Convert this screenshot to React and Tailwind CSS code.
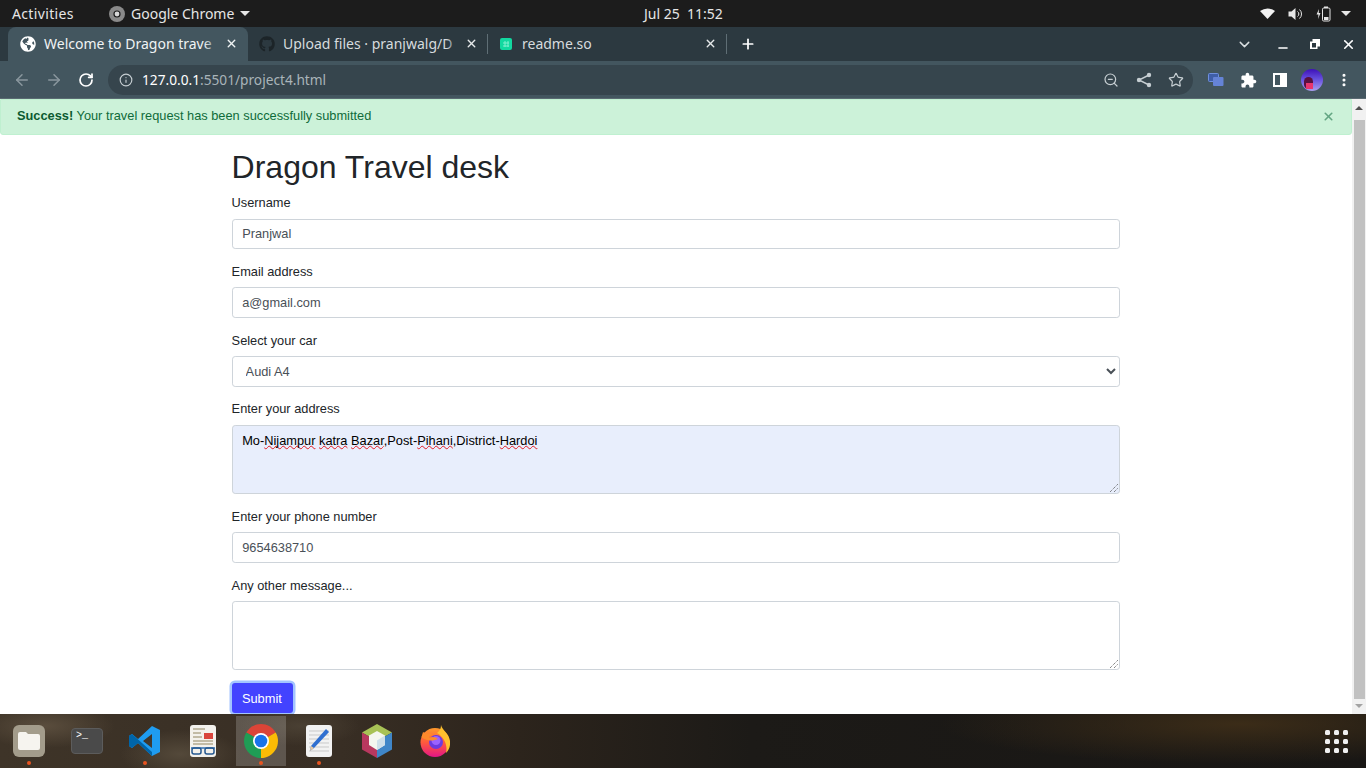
import React from 'react';
import { ArrowLeft, ArrowRight, RotateCw, Info, ZoomOut, Star, EllipsisVertical, ChevronDown, Minus, X, Plus } from 'lucide-react';
import { FaGlobeAmericas, FaGithub } from 'react-icons/fa';

const uiFont = "font-['Noto_Sans',sans-serif]";

const TopBar = () => (
    <div className={`h-[27px] shrink-0 bg-[#1c1c1c] flex items-center text-[14px] text-[#e6e6e6] relative ${uiFont}`}>
        <span className="ml-3 w-[97px] tracking-[0.35px]">Activities</span>
        <svg width="16" height="16" viewBox="0 0 16 16">
            <circle cx="8" cy="8" r="8" fill="#8a8a8a" />
            <circle cx="8" cy="8" r="3.6" fill="#1c1c1c" />
            <circle cx="8" cy="8" r="2.4" fill="#d8d8d8" />
        </svg>
        <span className="ml-[6px]">Google Chrome</span>
        <div className="ml-[6px] w-0 h-0 border-x-[5px] border-x-transparent border-t-[5px] border-t-[#e6e6e6]"></div>
        <span className="absolute left-[644px] top-[3px]">Jul 25&nbsp;&nbsp;11:52</span>
        <div className="ml-auto mr-[15px] flex items-center">
            <svg width="15" height="11" viewBox="0 0 15 11"><path d="M0 3 Q7.5 -2 15 3 L7.5 11 Z" fill="#f2f2f2" /></svg>
            <svg width="15" height="14" viewBox="0 0 15 14" className="ml-[13px]">
                <path d="M0.5 4.5h3L7.5 1v12L3.5 9.5h-3z" fill="#e6e6e6" />
                <path d="M9.5 4.5a3 3 0 0 1 0 5M11.5 2.5a6 6 0 0 1 0 9" stroke="#e6e6e6" strokeWidth="1" fill="none" />
            </svg>
            <svg width="15" height="16" viewBox="0 0 15 16" className="ml-[13px]">
                <path d="M3 3 L0.5 8.5H2.5L2 13 L4.5 7H2.7z" fill="#e6e6e6" />
                <rect x="6.5" y="2" width="7.5" height="13" rx="1.2" fill="none" stroke="#e6e6e6" strokeWidth="1" />
                <rect x="8" y="0.5" width="4" height="1.5" fill="#e6e6e6" />
                <rect x="8" y="11" width="4.5" height="3" fill="#e6e6e6" />
            </svg>
            <div className="ml-[10px] w-0 h-0 border-x-[5px] border-x-transparent border-t-[5px] border-t-[#e6e6e6]"></div>
        </div>
    </div>
);

const TabStrip = () => (
    <div className={`h-[34px] shrink-0 bg-[#2c3940] flex items-center text-[14px] ${uiFont}`}>
        <div className="ml-2 w-[240px] h-[34px] bg-[#43565f] rounded-t-lg flex items-center text-[#f0f3f4] relative">
            <FaGlobeAmericas size={16} className="ml-3 shrink-0 text-white" />
            <span className="ml-2 -mt-[2px] whitespace-nowrap">Welcome to Dragon trave</span>
            <div className="absolute left-[196px] top-[8px] w-[16px] h-[18px] bg-[linear-gradient(90deg,transparent,#43565f)]"></div>
            <X size={13} strokeWidth={2.6} className="absolute left-[217px] top-[10px]" />
        </div>
        <div className="w-[239px] h-[34px] flex items-center text-[#d6dbde] relative">
            <FaGithub size={16} className="ml-[11px] shrink-0 text-[#1c2428]" />
            <span className="ml-2 -mt-[2px] whitespace-nowrap">Upload files · pranjwalg/D</span>
            <div className="absolute left-[198px] top-[8px] w-[14px] h-[18px] bg-[linear-gradient(90deg,transparent,#2c3940)]"></div>
            <X size={13} strokeWidth={2.6} className="absolute left-[217px] top-[10px] text-[#e6e9ea]" />
        </div>
        <div className="w-px h-5 bg-[#5f6e75]"></div>
        <div className="w-[238px] h-[34px] flex items-center text-[#d6dbde] relative">
            <svg width="12" height="12" viewBox="0 0 12 12" className="ml-[12px] shrink-0">
                <rect width="12" height="12" rx="2" fill="#12d9a0" />
                <path d="M5 3v6M8 3v6M3 5h6M3 8h6" stroke="#7ff0cf" strokeWidth="1" />
            </svg>
            <span className="ml-[10px] -mt-[2px]">readme.so</span>
            <X size={13} strokeWidth={2.6} className="absolute left-[216px] top-[10px] text-[#e6e9ea]" />
        </div>
        <div className="w-px h-5 bg-[#5f6e75]"></div>
        <Plus size={16} strokeWidth={2.6} className="ml-[13px] text-white" />
        <ChevronDown size={17} strokeWidth={2} className="ml-[480px] text-[#d9dee0]" />
        <Minus size={14} strokeWidth={2.4} className="ml-[23px] mt-[8px] text-white" />
        <svg width="12" height="12" viewBox="0 0 12 12" className="ml-[19px]">
            <path d="M3.5 1h7.5v7.5H8.5V11H1V3.5h2.5z M3 5v4.5h4V5z" fill="#fff" fillRule="evenodd" />
        </svg>
        <X size={15} strokeWidth={2.6} className="ml-[20px] text-white" />
    </div>
);

const Toolbar = () => (
    <div className="h-[38px] pt-px shrink-0 bg-[#43565f] flex items-center border-b border-[#5a6a72]">
        <ArrowLeft size={18} strokeWidth={2} className="ml-[13px] text-[#8a979e]" />
        <ArrowRight size={18} strokeWidth={2} className="ml-[14px] text-[#8a979e]" />
        <RotateCw size={16} strokeWidth={2.6} className="ml-[15px] text-white" />
        <div className="ml-[14px] w-[1085px] h-[30px] rounded-full bg-[#36454d] flex items-center">
            <Info size={14} strokeWidth={2} className="ml-[11px] text-[#c6ced2]" />
            <span className="ml-[9px] text-[13.7px] font-['Noto_Sans',sans-serif] text-white">127.0.0.1<span className="text-[#a9b4b9]">:5501/project4.html</span></span>
            <ZoomOut size={16} strokeWidth={1.8} className="ml-auto text-[#c6ced2]" />
            <svg width="16" height="16" viewBox="0 0 16 16" className="ml-[17px]">
                <path d="M13 3 3 8l10 5" stroke="#c6ced2" strokeWidth="1.4" fill="none" />
                <circle cx="13" cy="3" r="2.2" fill="#c6ced2" />
                <circle cx="3" cy="8" r="2.2" fill="#c6ced2" />
                <circle cx="13" cy="13" r="2.2" fill="#c6ced2" />
            </svg>
            <Star size={16} strokeWidth={1.8} className="ml-[16px] mr-[9px] text-[#c6ced2]" />
        </div>
        <svg width="16" height="14" viewBox="0 0 16 14" className="ml-[15px]">
            <rect x="0.5" y="0.5" width="10" height="8" rx="1" fill="#3f5ea8" stroke="#6f8fdd" />
            <rect x="5" y="4" width="10.5" height="9" rx="1" fill="#6583d6" />
        </svg>
        <svg width="17" height="17" viewBox="0 0 24 24" className="ml-[16px]">
            <path d="M20.5 11H19V7c0-1.1-.9-2-2-2h-4V3.5C13 2.12 11.88 1 10.5 1S8 2.12 8 3.5V5H4c-1.1 0-1.99.9-1.99 2v3.8H3.5c1.49 0 2.7 1.21 2.7 2.7s-1.21 2.7-2.7 2.7H2V20c0 1.1.9 2 2 2h3.8v-1.5c0-1.49 1.21-2.7 2.7-2.7 1.49 0 2.7 1.21 2.7 2.7V22H17c1.1 0 2-.9 2-2v-4h1.5c1.38 0 2.5-1.12 2.5-2.5S21.88 11 20.5 11z" fill="#fff" />
        </svg>
        <div className="ml-[16px] w-[14px] h-[14px] border-2 border-white flex justify-end">
            <div className="w-[5px] h-full bg-white"></div>
        </div>
        <div className="ml-[14px] w-[22px] h-[22px] rounded-full bg-[linear-gradient(180deg,#3d10b8_0%,#6a55e0_50%,#a9a0ee_100%)] relative overflow-hidden">
            <div className="absolute left-[3px] top-[8px] w-[9px] h-[12px] rounded-full bg-[#5a1040]"></div>
            <div className="absolute left-[5px] top-[14px] w-[7px] h-[6px] bg-[#e8356f]"></div>
        </div>
        <EllipsisVertical size={16} strokeWidth={2.6} className="ml-[13px] text-white" />
    </div>
);

const fieldBase = "w-full block h-[30.4px] bg-white border border-[#ced4da] rounded-[3.2px] px-[9.6px] text-[12.8px] text-[#495057] outline-none";

const Field = ({ label, children }) => (
    <div className="mb-[12.8px]">
        <label className="block h-[19.2px] leading-[19.2px] mb-[6.4px] text-[12.8px] text-[#212529]">{label}</label>
        {children}
    </div>
);

const Word = ({ children }) => (
    <span className="underline decoration-wavy decoration-[#e01b24] decoration-1 underline-offset-0 [text-decoration-skip-ink:none]">{children}</span>
);

const Grip = () => (
    <svg width="8" height="8" viewBox="0 0 8 8" className="absolute right-[1px] bottom-[1px]">
        <path d="M0 8 8 0M4 8 8 4" stroke="#555" strokeWidth="1" strokeDasharray="1 1" />
    </svg>
);

const Page = () => (
    <div className="flex-1 min-h-0 flex overflow-hidden bg-white font-['Liberation_Sans',sans-serif]">
        <div className="flex-1 min-w-0 overflow-hidden">
            <div className="h-9 pb-[2px] bg-[#ccf2d9] border border-[#bff0d0] rounded-b-[3px] flex items-center text-[12.8px] text-[#0f6b3a]">
                <span className="ml-4"><strong className="font-bold text-[#0b5a30]">Success!</strong> Your travel request has been successfully submitted</span>
                <X size={13} strokeWidth={3} className="ml-auto mr-[16px] text-[#63a582]" />
            </div>
            <div className="w-[888px] ml-[231.6px]">
                <h1 className="mt-[13px] mb-[7.1px] h-[38px] leading-[38px] text-[32px] text-[#212529]">Dragon Travel desk</h1>
                <Field label="Username">
                    <input className={fieldBase} defaultValue="Pranjwal" />
                </Field>
                <Field label="Email address">
                    <input className={fieldBase} defaultValue="a@gmail.com" />
                </Field>
                <Field label="Select your car">
                    <select className={`${fieldBase} pl-[9px]`} defaultValue="Audi A4">
                        <option>Audi A4</option>
                    </select>
                </Field>
                <Field label="Enter your address">
                    <div className="relative w-full h-[69px] bg-[#e8eefc] border border-[#ced4da] rounded-[3.2px] px-[9.6px] py-[5px] text-[12.8px] text-black">
                        Mo-<Word>Nijampur</Word> <Word>katra</Word> <Word>Bazar</Word>,Post-<Word>Pihani</Word>,District-<Word>Hardoi</Word>
                        <Grip />
                    </div>
                </Field>
                <Field label="Enter your phone number">
                    <input className={fieldBase} defaultValue="9654638710" />
                </Field>
                <Field label="Any other message...">
                    <div className="relative w-full h-[69px] bg-white border border-[#ced4da] rounded-[3.2px]">
                        <Grip />
                    </div>
                </Field>
                <button className="block w-[61.6px] h-[30.4px] pr-[1px] bg-[#4343ff] text-white text-[12.8px] rounded-[3px] ring-[2.5px] ring-[#a3c4ff]">Submit</button>
            </div>
        </div>
        <div className="w-[14px] shrink-0 bg-[#f1f1f1] flex flex-col items-center">
            <div className="mt-[7px] w-0 h-0 border-x-[4px] border-x-transparent border-b-[4px] border-b-[#505050]"></div>
            <div className="mt-[10px] w-[11px] flex-1 bg-[#c1c1c1]"></div>
            <div className="mt-[5px] mb-[6px] w-0 h-0 border-x-[4px] border-x-transparent border-t-[4px] border-t-[#a3a3a3]"></div>
        </div>
    </div>
);

const RunDot = () => <div className="absolute left-1/2 -translate-x-1/2 bottom-[1px] w-1 h-1 rounded-full bg-[#e95420]"></div>;

const Slot = ({ children, running, active }) => (
    <div className={`relative w-[58px] h-[50px] flex items-center justify-center ${active ? 'rounded-[3px] bg-[linear-gradient(90deg,transparent_4px,#ffffff30_4px,#ffffff30_54px,transparent_54px)]' : ''}`}>
        {children}
        {running && <RunDot />}
    </div>
);

const ChromeIcon = () => (
    <svg width="34" height="34" viewBox="0 0 34 34">
        <path d="M17 17 L2.3 8.5 A17 17 0 0 1 31.7 8.5 Z" fill="#db4437" />
        <path d="M17 17 L31.7 8.5 A17 17 0 0 1 17 34 Z" fill="#fbbc05" />
        <path d="M17 17 L17 34 A17 17 0 0 1 2.3 8.5 Z" fill="#1f9d55" />
        <circle cx="17" cy="17" r="8" fill="#fff" />
        <circle cx="17" cy="17" r="6.3" fill="#1a73e8" />
    </svg>
);

const FirefoxIcon = () => (
    <svg width="30" height="32" viewBox="0 0 30 32">
        <defs>
            <linearGradient id="ffBody" x1="0" y1="0" x2="0" y2="1">
                <stop offset="0" stopColor="#ff9a2b" />
                <stop offset="0.5" stopColor="#ff5a3c" />
                <stop offset="1" stopColor="#e31587" />
            </linearGradient>
        </defs>
        <circle cx="15" cy="17.5" r="14.5" fill="url(#ffBody)" />
        <path d="M21 0 C22 5 29 8 30 16 C30.5 21 29 25 26 28 C28 20 24 12 17 8 C20 6 21 3 21 0z" fill="#ffc02e" />
        <circle cx="16" cy="17" r="7" fill="#6b3be0" />
        <circle cx="16" cy="15.5" r="4.5" fill="#9a63ff" />
        <path d="M3 7 C5 9 9 8 13 9 C10 10 9 12 9 13 C12 11 16 12 18 14 L13 15.5 C9 16 3 14 1.5 12z" fill="#ff8a2b" />
    </svg>
);

const Dock = () => (
    <div className="h-[54px] shrink-0 flex items-center bg-[#191715] bg-[radial-gradient(ellipse_70px_22px_at_45px_12px,#5a4d3d_0%,transparent_100%),radial-gradient(ellipse_60px_24px_at_180px_40px,#54493a_0%,transparent_100%),radial-gradient(ellipse_60px_20px_at_300px_12px,#4a4033_0%,transparent_100%),radial-gradient(ellipse_300px_40px_at_1240px_10px,#3b2c18_0%,transparent_100%),linear-gradient(90deg,#3e3428_0%,#382e24_25%,#2c241c_38%,#1c1a17_55%,#181614_100%)]">
        {/* files */}
        <Slot running>
            <div className="w-[32px] h-[32px] rounded-[6px] bg-[#a39c8b] flex items-center justify-center">
                <svg width="24" height="20" viewBox="0 0 24 20"><path d="M1 3a2 2 0 0 1 2-2h6l2 2h10a2 2 0 0 1 2 2v12a2 2 0 0 1-2 2H3a2 2 0 0 1-2-2z" fill="#f6f4ef" /></svg>
            </div>
        </Slot>
        {/* terminal */}
        <Slot>
            <div className="w-[32px] h-[26px] rounded-[4px] bg-[#4a4a4a] border border-[#5c5c5c] text-[10px] leading-[10px] text-white font-['Liberation_Mono',monospace] pl-[4px] pt-[2px]">&gt;_</div>
        </Slot>
        {/* vscode */}
        <Slot running>
            <svg width="32" height="32" viewBox="0 0 32 32">
                <path d="M23 1 L31 5 V27 L23 31 L9 18 L3 23 L0 21 V11 L3 9 L9 14z M23 9 L14 16 L23 23z" fill="#1f9cf0" fillRule="evenodd" />
                <path d="M0 11 L3 9 L23 27 V31 L9 18 L3 23 L0 21z" fill="#0065a9" />
            </svg>
        </Slot>
        {/* document viewer */}
        <Slot>
            <svg width="26" height="32" viewBox="0 0 26 32">
                <rect width="26" height="32" rx="3" fill="#f3f1ec" />
                <path d="M3 4h12M3 8h8M3 12h9M3 16h20M3 19h20" stroke="#b3a98f" strokeWidth="1.3" />
                <rect x="14" y="8" width="9" height="6" fill="#d9453d" />
                <path d="M1 23h24" stroke="#2f6fb5" strokeWidth="1.5" />
                <rect x="2" y="23" width="9" height="6" rx="2" fill="none" stroke="#24578f" strokeWidth="1.5" />
                <rect x="15" y="23" width="9" height="6" rx="2" fill="none" stroke="#24578f" strokeWidth="1.5" />
            </svg>
        </Slot>
        {/* chrome, running */}
        <Slot running active>
            <ChromeIcon />
        </Slot>
        {/* text editor */}
        <Slot running>
            <svg width="26" height="32" viewBox="0 0 26 32">
                <rect width="26" height="32" rx="3" fill="#f2f2f2" />
                <path d="M3 6h20M3 10h20M3 14h20M3 18h20M3 22h20M3 26h20" stroke="#c9c9c9" strokeWidth="1" />
                <path d="M20 4 L23 7 L8 23 L4 26 L5 21z" fill="#2f6fd0" />
                <path d="M4 26 L5 21 L8 23z" fill="#e8c9a0" />
            </svg>
        </Slot>
        {/* netbeans */}
        <Slot>
            <svg width="30" height="34" viewBox="0 0 30 34">
                <path d="M15 0 L30 8.5 L15 17 L0 8.5z" fill="#a8c256" />
                <path d="M0 8.5 L15 17 V34 L0 25.5z" fill="#b8385f" />
                <path d="M30 8.5 L15 17 V34 L30 25.5z" fill="#3f86c8" />
                <path d="M15 7 L23 11.5 V21 L15 26 L7 21 V11.5z" fill="#f4f6ef" />
                <path d="M15 16.5 L23 11.5 V21 L15 26z" fill="#cfe0ea" />
            </svg>
        </Slot>
        {/* firefox */}
        <Slot>
            <FirefoxIcon />
        </Slot>
        <div className="ml-auto mr-[18px] grid grid-cols-3 gap-[4px]">
            {Array.from({ length: 9 }).map((_, i) => (
                <div key={i} className="w-[5px] h-[5px] rounded-[1.5px] bg-[#f0f0f0]"></div>
            ))}
        </div>
    </div>
);

export default function App() {
    return (
        <div className="w-[1366px] h-[768px] overflow-hidden flex flex-col">
            <TopBar />
            <TabStrip />
            <Toolbar />
            <Page />
            <Dock />
        </div>
    );
}
